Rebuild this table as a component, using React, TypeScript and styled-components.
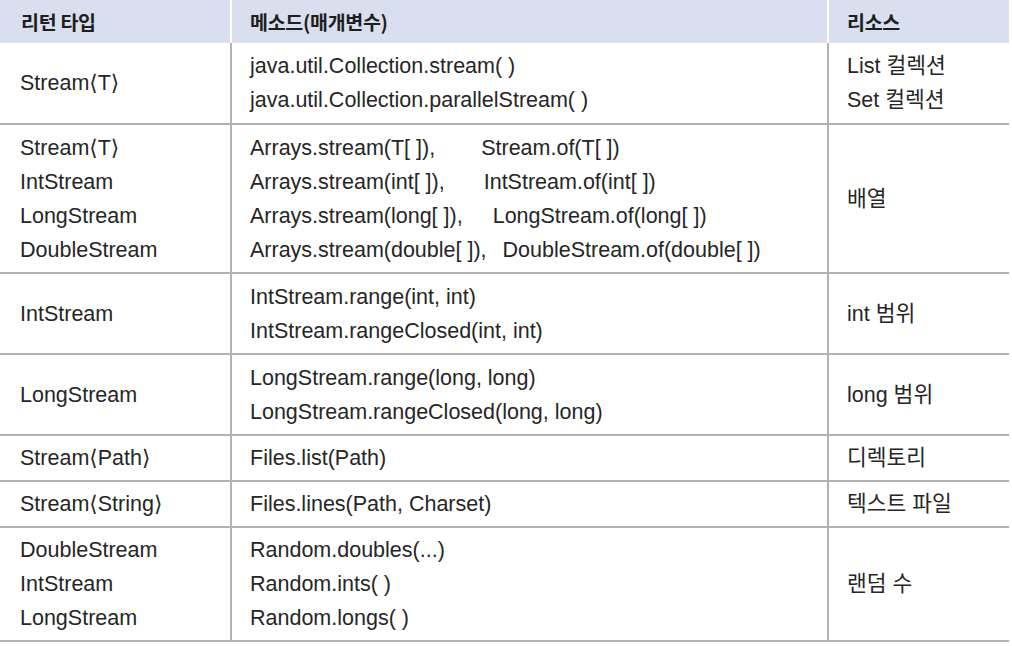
import React from "react";
import styled, { createGlobalStyle } from "styled-components";

const Global = createGlobalStyle`
  html, body { margin: 0; padding: 0; background: #ffffff; }
  body { font-family: "Liberation Sans", "Noto Sans CJK KR", sans-serif; color: #222222; }
`;

const Table = styled.div`
  width: 1009px;
  display: flex;
  flex-direction: column;
`;

const Columns = `
  display: grid;
  grid-template-columns: 230px 597px 182px;
`;

const HeadRow = styled.div`
  ${Columns}
  height: 43px;
  background: #d9dfee;
`;

const HeadCell = styled.div<{ $first?: boolean }>`
  display: flex;
  align-items: center;
  padding-left: ${(p) => (p.$first ? "21px" : "18px")};
  border-left: ${(p) => (p.$first ? "none" : "2px solid #ffffff")};
  font-size: 19.5px;
  font-weight: 700;
  color: #1e1e1e;
  font-family: "Noto Sans CJK KR", sans-serif;
  letter-spacing: -0.3px;
`;

const Row = styled.div<{ $h: number }>`
  ${Columns}
  height: ${(p) => p.$h}px;
  box-sizing: border-box;
  border-bottom: 2px solid #b3b3b3;
`;

const Cell = styled.div<{ $first?: boolean }>`
  display: flex;
  flex-direction: column;
  justify-content: center;
  padding-left: ${(p) => (p.$first ? "20px" : "18px")};
  border-left: ${(p) => (p.$first ? "none" : "2px solid #b3b3b3")};
  font-size: 21.5px;
  line-height: 34px;
  white-space: pre;
  color: #262626;
`;

const Line = styled.div`
  display: flex;
  align-items: baseline;
`;

const Second = styled.span<{ $gap: number }>`
  margin-left: ${(p) => p.$gap}px;
`;

const Bracket = styled.span`
  font-family: "DejaVu Sans", sans-serif;
  font-size: 1em;
`;

type M = string | [string, string, number];

const rows: { h: number; type: [string, string?][]; methods: M[]; src: string[] }[] = [
  {
    h: 82,
    type: [["Stream", "T"]],
    methods: ["java.util.Collection.stream( )", "java.util.Collection.parallelStream( )"],
    src: ["List 컬렉션", "Set 컬렉션"],
  },
  {
    h: 149,
    type: [["Stream", "T"], ["IntStream"], ["LongStream"], ["DoubleStream"]],
    methods: [
      ["Arrays.stream(T[ ]),", "Stream.of(T[ ])", 46],
      ["Arrays.stream(int[ ]),", "IntStream.of(int[ ])", 39],
      ["Arrays.stream(long[ ]),", "LongStream.of(long[ ])", 30],
      ["Arrays.stream(double[ ]),", "DoubleStream.of(double[ ])", 16],
    ],
    src: ["배열"],
  },
  {
    h: 81,
    type: [["IntStream"]],
    methods: ["IntStream.range(int, int)", "IntStream.rangeClosed(int, int)"],
    src: ["int 범위"],
  },
  {
    h: 81,
    type: [["LongStream"]],
    methods: ["LongStream.range(long, long)", "LongStream.rangeClosed(long, long)"],
    src: ["long 범위"],
  },
  { h: 46, type: [["Stream", "Path"]], methods: ["Files.list(Path)"], src: ["디렉토리"] },
  { h: 46, type: [["Stream", "String"]], methods: ["Files.lines(Path, Charset)"], src: ["텍스트 파일"] },
  {
    h: 114,
    type: [["DoubleStream"], ["IntStream"], ["LongStream"]],
    methods: ["Random.doubles(...)", "Random.ints( )", "Random.longs( )"],
    src: ["랜덤 수"],
  },
];

export default function App() {
  return (
    <>
      <Global />
      <Table>
        <HeadRow>
          <HeadCell $first>리턴 타입</HeadCell>
          <HeadCell>메소드(매개변수)</HeadCell>
          <HeadCell>리소스</HeadCell>
        </HeadRow>
        {rows.map((r, i) => (
          <Row key={i} $h={r.h}>
            <Cell $first>
              {r.type.map(([name, param], k) => (
                <Line key={k}>
                  {name}
                  {param && (
                    <>
                      <Bracket>⟨</Bracket>
                      {param}
                      <Bracket>⟩</Bracket>
                    </>
                  )}
                </Line>
              ))}
            </Cell>
            <Cell>
              {r.methods.map((m, j) =>
                typeof m === "string" ? (
                  <Line key={j}>{m}</Line>
                ) : (
                  <Line key={j}>
                    {m[0]}
                    <Second $gap={m[2]}>{m[1]}</Second>
                  </Line>
                )
              )}
            </Cell>
            <Cell>
              {r.src.map((s) => (
                <Line key={s}>{s}</Line>
              ))}
            </Cell>
          </Row>
        ))}
      </Table>
    </>
  );
}
